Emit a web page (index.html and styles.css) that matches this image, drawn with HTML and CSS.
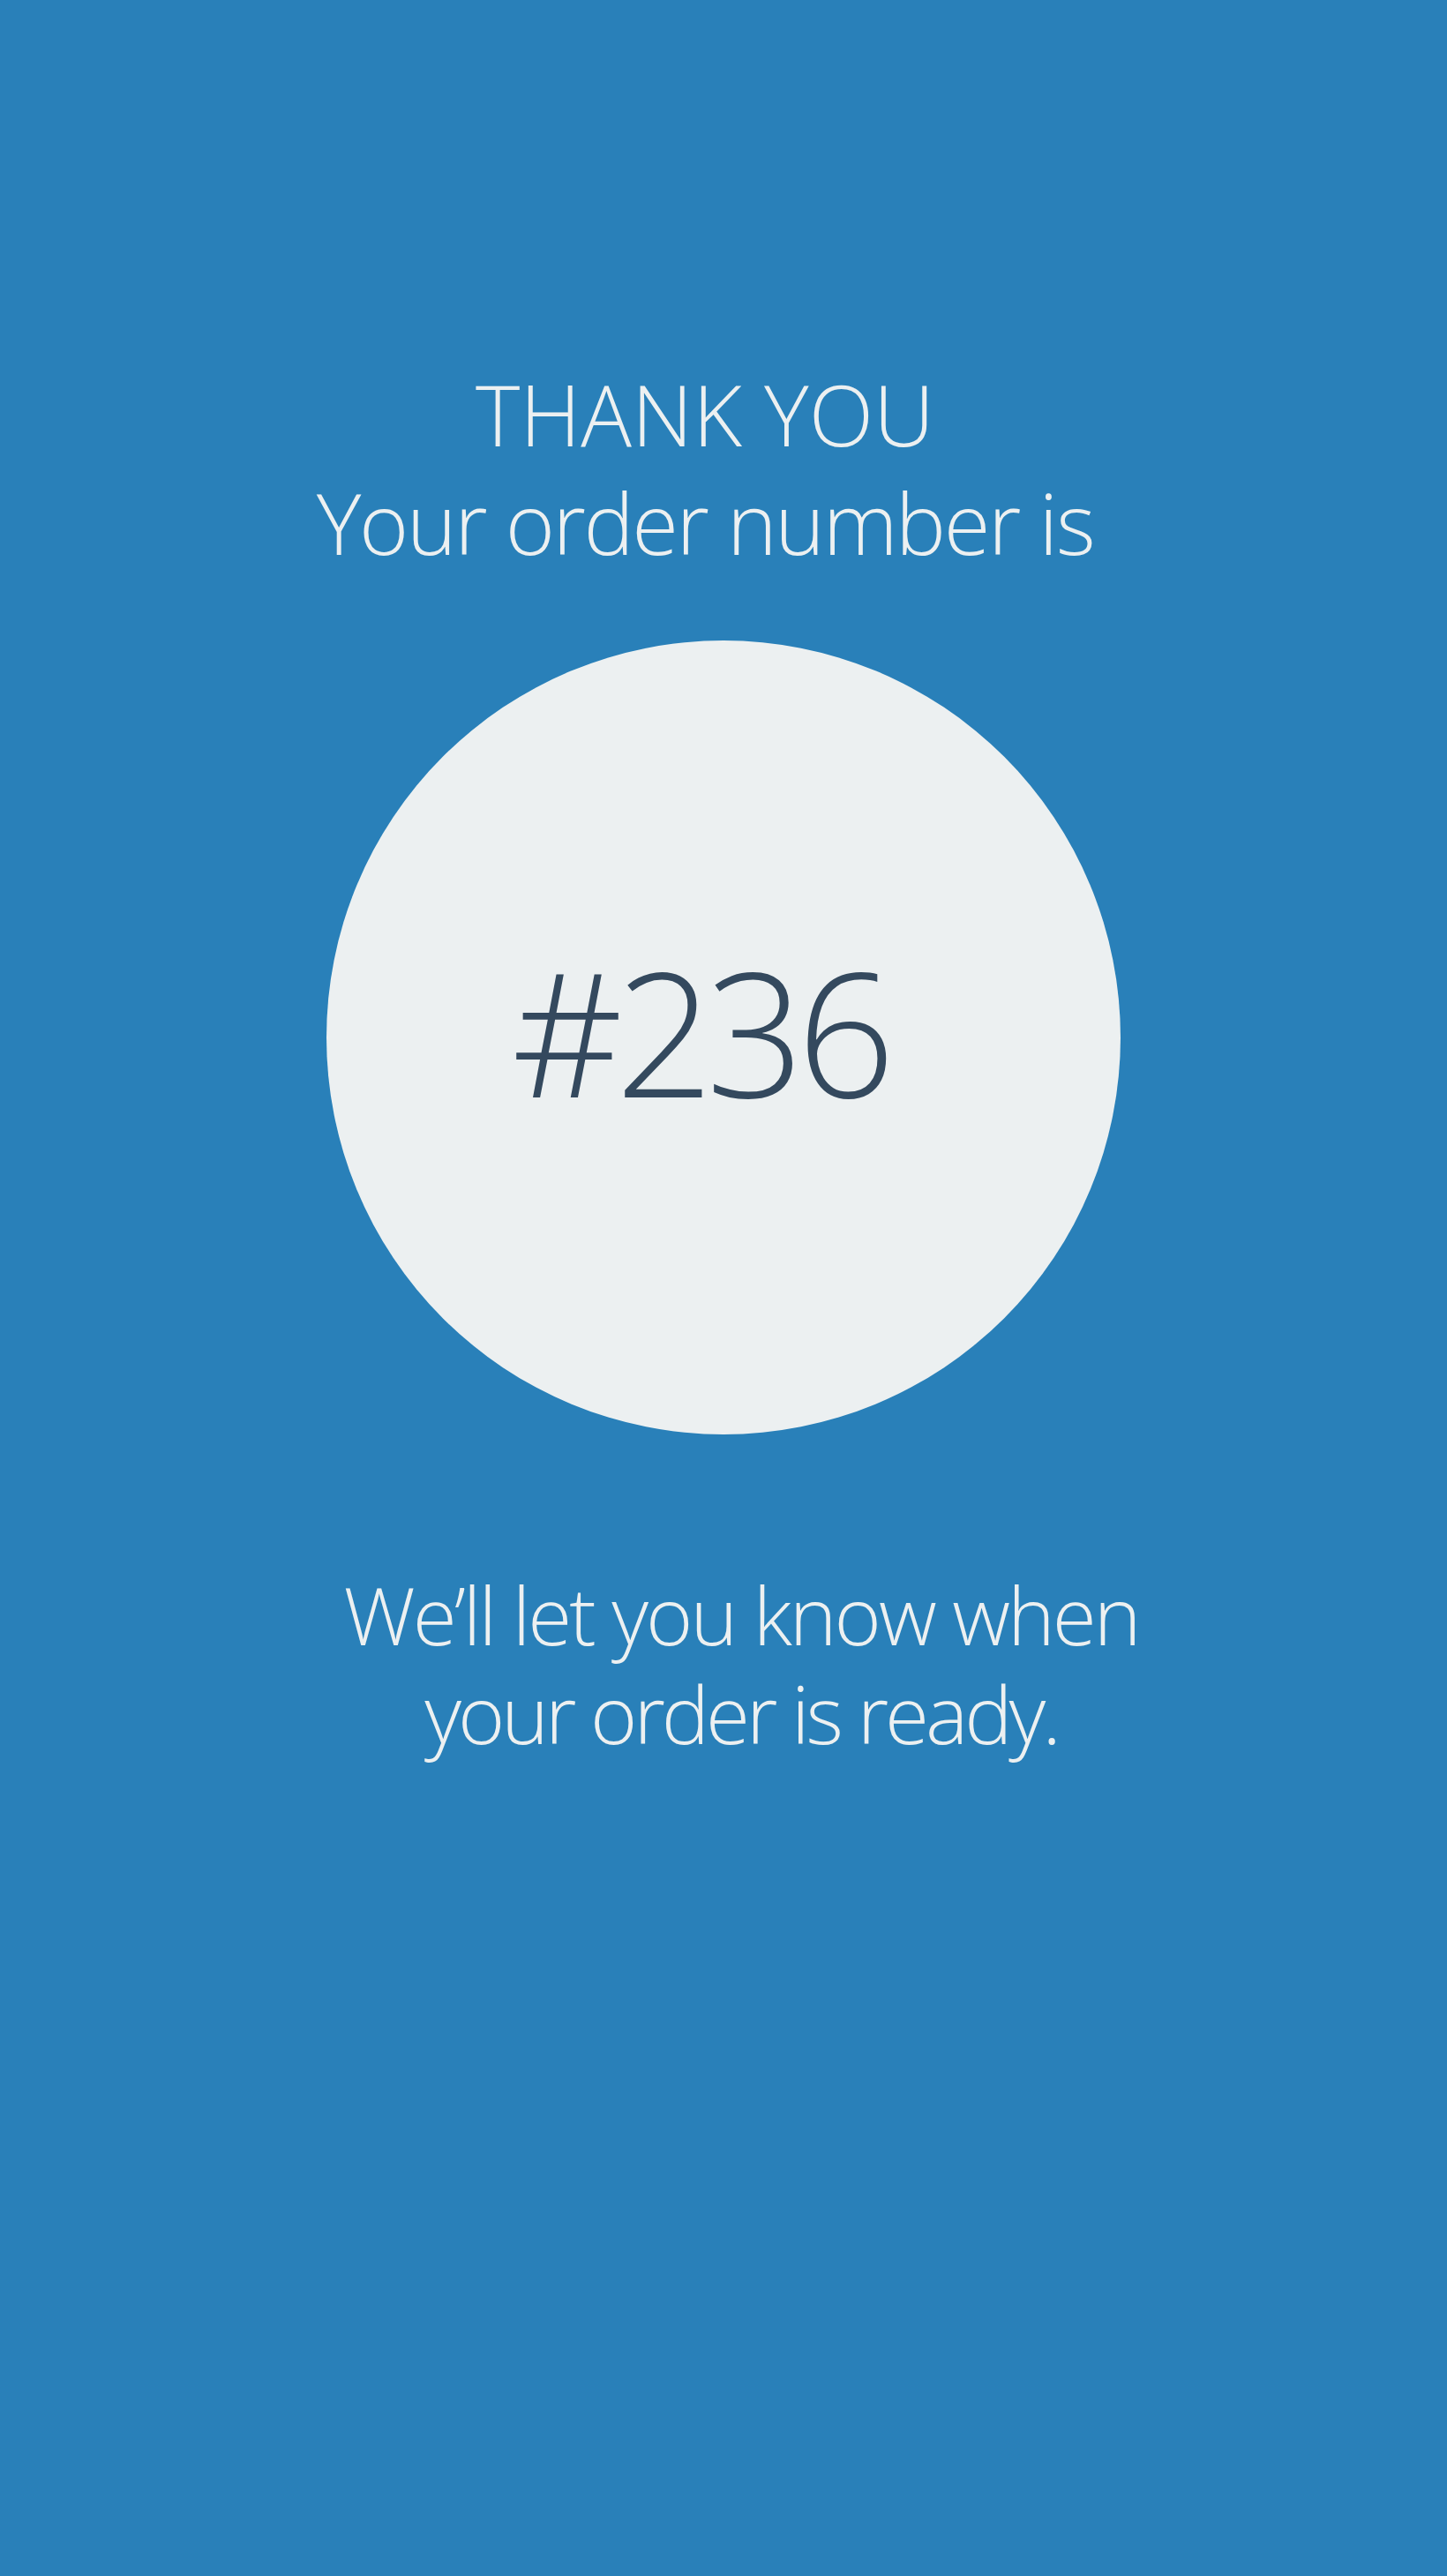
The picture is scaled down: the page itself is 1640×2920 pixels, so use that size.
FILE: index.html
```html
<!DOCTYPE html>
<html lang="en">
<head>
<meta charset="utf-8">
<title>Thank you</title>
<link rel="stylesheet" href="styles.css">
</head>
<body>
<main class="screen">
  <h1 class="title">
    <span class="title-line">THANK YOU</span>
    <span class="title-line title-sub">Your order number is</span>
  </h1>
  <div class="badge">
    <span class="order-number">#236</span>
  </div>
  <p class="note">
    <span class="note-line note-first">We’ll let you know when</span>
    <span class="note-line note-second">your order is ready.</span>
  </p>
</main>
</body>
</html>
```

FILE: styles.css
```css
html, body {
  margin: 0;
  padding: 0;
}
body {
  background: #2980b9;
  font-family: "Open Sans", "Liberation Sans", sans-serif;
  font-weight: 300;
  color: #ecf0f1;
}
.screen {
  width: 1640px;
  height: 2920px;
  display: flex;
  flex-direction: column;
  align-items: center;
}
.title {
  margin: 407px 0 0;
  padding-right: 42px;
  font-size: 96px;
  font-weight: 300;
  line-height: 123px;
  text-align: center;
  display: flex;
  flex-direction: column;
  align-items: center;
}
.title-line {
  display: block;
}
.title-sub {
  letter-spacing: -2.4px;
}
.badge {
  margin-top: 73px;
  width: 900px;
  height: 900px;
  border-radius: 50%;
  background: #ecf0f1;
  display: flex;
  align-items: center;
  justify-content: center;
  box-sizing: border-box;
  padding-bottom: 16px;
  padding-right: 54px;
}
.order-number {
  font-size: 195px;
  line-height: 195px;
  letter-spacing: -8.5px;
  color: #34495e;
  font-weight: 300;
}
.note {
  margin: 148px 0 0;
  padding-left: 40px;
  font-size: 91px;
  line-height: 112px;
  text-align: center;
  display: flex;
  flex-direction: column;
  align-items: center;
}
.note-line {
  display: block;
}
.note-first {
  letter-spacing: -3px;
}
.note-second {
  letter-spacing: -4px;
}
```
